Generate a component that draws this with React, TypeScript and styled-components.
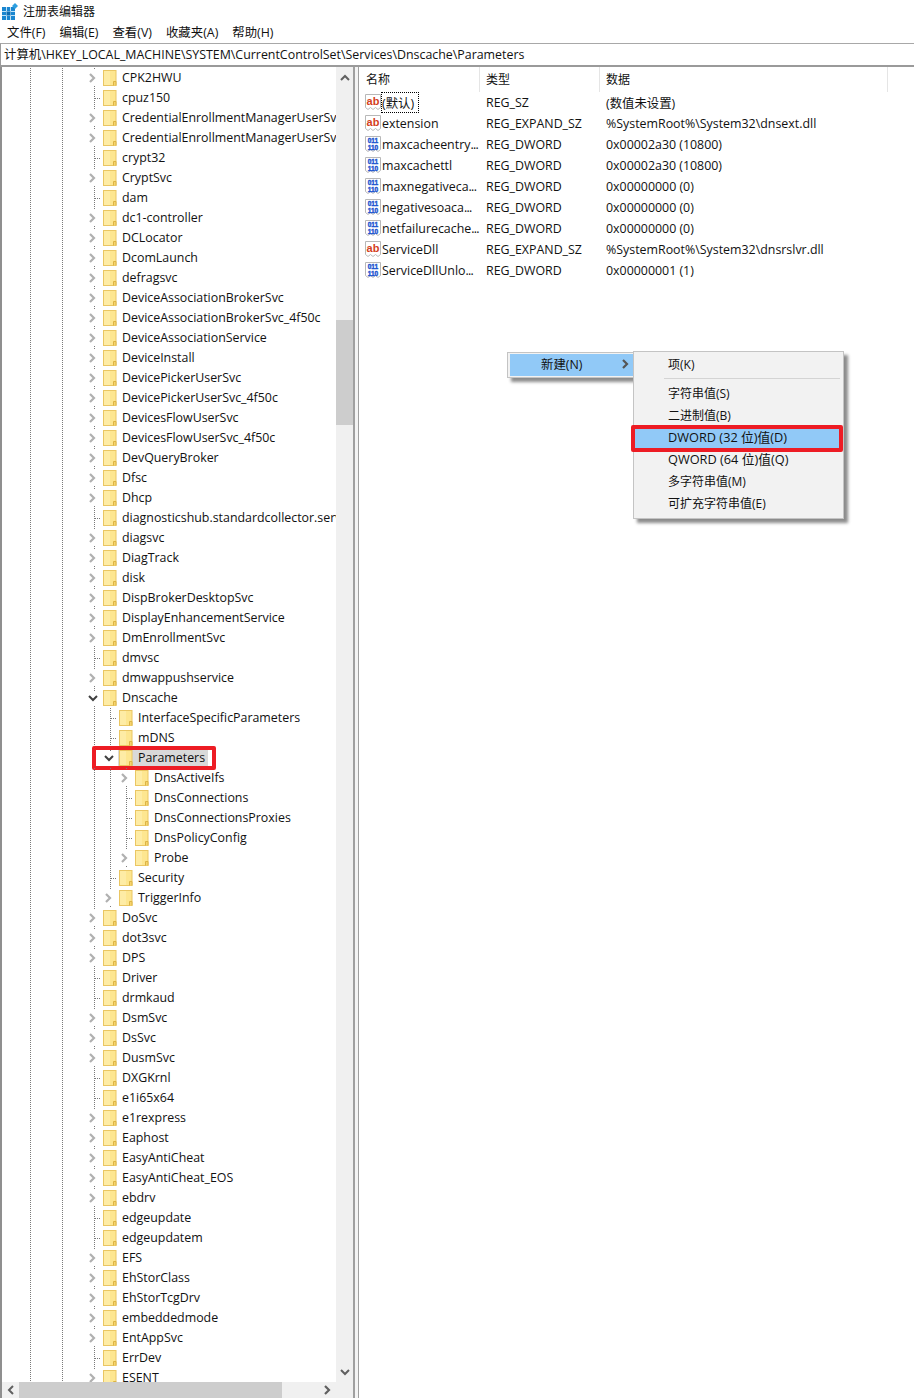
import React from "react";
import styled, { createGlobalStyle } from "styled-components";

const Global = createGlobalStyle`
  html, body { margin: 0; padding: 0; background: #fff; }
  body { font-family: "Open Sans", "Noto Sans CJK SC", sans-serif; font-size: 12.4px; color: #111; }
`;

const Window = styled.div`
  width: 914px;
  height: 1398px;
  display: flex;
  flex-direction: column;
  overflow: hidden;
  background: #fff;
`;
const TitleBar = styled.div`
  height: 22px;
  display: flex;
  align-items: center;
  gap: 5px;
  padding-left: 2px;
  font-size: 12px;
`;
const MenuBar = styled.div`
  height: 21px;
  box-sizing: border-box;
  display: flex;
  align-items: center;
  gap: 14px;
  padding: 0 0 2px 7px;
`;
const AddressBar = styled.div`
  height: 24px;
  display: flex;
  align-items: center;
  padding: 0 0 2px 3px;
  box-sizing: border-box;
  border-top: 1px solid #a8a8a8;
  border-bottom: 2px solid #9a9a9a;
  border-left: 1px solid #9a9a9a;
  white-space: nowrap;
`;
const Split = styled.div`
  flex: 1;
  min-height: 0;
  display: flex;
`;
const TreePane = styled.div`
  width: 353px;
  flex: none;
  box-sizing: border-box;
  border-left: 2px solid #8f8f8f;
  display: grid;
  grid-template-columns: 1fr 17px;
  grid-template-rows: 1fr 16px;
  min-height: 0;
`;
const Divider = styled.div`
  width: 3px;
  flex: none;
  background: #f4f4f4;
  border-left: 2px solid #a0a0a0;
  border-right: 1px solid #a0a0a0;
`;
const Tree = styled.div`
  overflow: hidden;
  min-height: 0;
  padding: 1px 0 0 20px;
`;
const Row = styled.div`
  position: relative;
  height: 20px;
  display: flex;
  align-items: stretch;
  white-space: nowrap;
`;
const Cell = styled.div<{ $line?: boolean }>`
  width: 16px;
  flex: none;
  position: relative;
  display: flex;
  align-items: center;
  justify-content: center;
  background-image: ${(p) => (p.$line ? "linear-gradient(#7a7a7a 50%, transparent 50%)" : "none")};
  background-size: 1px 2px;
  background-repeat: repeat-y;
  background-position: 8px 0;
`;
const BranchTick = styled.div`
  position: absolute;
  left: 9px;
  top: 10px;
  width: 6px;
  height: 1px;
  background-image: linear-gradient(90deg, #7a7a7a 50%, transparent 50%);
  background-size: 2px 1px;
`;
const ChevronBox = styled.span`
  display: flex;
  background: #fff;
  padding: 3px 1px;
  margin-right: 3px;
`;
const FolderCell = styled.div`
  width: 16px;
  flex: none;
  display: flex;
  align-items: center;
  justify-content: center;
`;
const Label = styled.span`
  display: flex;
  align-items: center;
  padding: 0 3px 0 4px;
  line-height: 20px;
`;
const Selected = styled.div`
  display: flex;
  background: #d9d9d9;
`;
const RedFrame = styled.div`
  position: absolute;
  border: 4px solid #ed1c24;
  border-radius: 2px;
  box-sizing: border-box;
  pointer-events: none;
`;
const ParamFrame = styled(RedFrame)`
  left: 70px;
  top: -2px;
  width: 124px;
  height: 24px;
`;
const VBar = styled.div`
  background: #f0f0f0;
  display: flex;
  flex-direction: column;
  align-items: center;
  min-height: 0;
`;
const VThumb = styled.div`
  width: 100%;
  height: 105px;
  flex: none;
  background: #cdcdcd;
`;
const VSpace = styled.div<{ $h?: number; $grow?: boolean }>`
  width: 100%;
  ${(p) => (p.$h ? `height:${p.$h}px;flex:none;` : "")}
  ${(p) => (p.$grow ? "flex:1;" : "")}
  display:flex;
  align-items: center;
  justify-content: center;
`;
const HBar = styled.div`
  background: #f0f0f0;
  display: flex;
  align-items: stretch;
`;
const HButton = styled.div`
  width: 17px;
  flex: none;
  display: flex;
  align-items: center;
  justify-content: center;
`;
const HThumb = styled.div`
  width: 263px;
  flex: none;
  background: #cdcdcd;
`;
const HSpace = styled.div`
  flex: 1;
`;
const Corner = styled.div`
  background: #f0f0f0;
`;
const ListPane = styled.div`
  flex: 1;
  position: relative;
  min-width: 0;
`;
const ListGrid = styled.div`
  display: grid;
  grid-template-columns: 121px 120px 288px;
  width: 529px;
`;
const HeaderCell = styled.div<{ $first?: boolean }>`
  height: 25px;
  display: flex;
  align-items: center;
  padding: 0 0 2px ${(p) => (p.$first ? "7px" : "6px")};
  box-sizing: border-box;
  border-right: 1px solid #e5e5e5;
  font-size: 12px;
`;
const NameCell = styled.div`
  height: 21px;
  display: flex;
  align-items: center;
  padding-left: 6px;
  gap: 1px;
  white-space: nowrap;
`;
const ValueCell = styled.div`
  height: 21px;
  display: flex;
  align-items: center;
  padding-left: 6px;
  white-space: nowrap;
`;
const FocusName = styled.span<{ $focus?: boolean }>`
  ${(p) =>
    p.$focus
      ? "outline: 1px dotted #000; padding: 0 4px 0 0; height: 19px; display:flex; align-items:center;"
      : ""}
`;
const Dots = styled.span`
  letter-spacing: -0.7px;
`;
const MenuOne = styled.div`
  position: absolute;
  left: 148px;
  top: 285px;
  width: 127px;
  height: 26px;
  box-sizing: border-box;
  padding: 1px 0 1px 2px;
  background: #f2f2f2;
  border: 1px solid #c4c4c4;
  box-shadow: 4px 4px 3px rgba(0, 0, 0, 0.45);
`;
const MenuOneItem = styled.div`
  height: 100%;
  box-sizing: border-box;
  background: #91c9f7;
  display: flex;
  align-items: center;
  justify-content: space-between;
  padding: 0 4px 2px 31px;
`;
const MenuTwo = styled.div`
  position: absolute;
  left: 274px;
  top: 284px;
  width: 211px;
  height: 168px;
  box-sizing: border-box;
  padding: 1px 0;
  background: #f2f2f2;
  border: 1px solid #c4c4c4;
  box-shadow: 4px 4px 3px rgba(0, 0, 0, 0.45);
`;
const MenuItem = styled.div<{ $active?: boolean; $latin?: boolean }>`
  position: relative;
  height: 22px;
  box-sizing: border-box;
  display: flex;
  align-items: center;
  padding: 0 0 ${(p) => (p.$latin ? "1px" : "0")} 34px;
  margin-right: 2px;
  background: ${(p) => (p.$active ? "#91c9f7" : "transparent")};
  font-size: ${(p) => (p.$latin ? "12.75px" : "12px")};
  white-space: pre;
`;
const MenuSep = styled.div`
  height: 1px;
  margin: 3px 3px 3px 30px;
  background: #d4d4d4;
`;
const DwordFrame = styled(RedFrame)`
  left: -3px;
  top: -1px;
  width: 212px;
  height: 27px;
`;

const AppIcon = () => (
  <svg width="16" height="18" viewBox="0 0 16 18">
    <rect x="0" y="5" width="13" height="13" fill="#1a86d0" />
    <path d="M0 9.5h13M0 13.5h13M4.5 5v13M8.5 5v13" stroke="#bfe2f7" strokeWidth="1" />
    <rect x="4.5" y="9.5" width="4" height="4" fill="#0d6bb0" />
    <path d="M13 1l3 3-3 3-3-3z" fill="#2f9fe0" />
  </svg>
);
const Folder = () => (
  <svg width="14" height="16" viewBox="0 0 14 16">
    <rect x="0.5" y="0.5" width="12.5" height="15" fill="#fde690" stroke="#eac663" />
    <rect x="1" y="1" width="6" height="14" fill="#fff0b4" opacity="0.6" />
    <path d="M10.5 15.5v-4h2.5v4" fill="#f6d46e" stroke="#dcb445" strokeWidth="1" />
  </svg>
);
const ChevronRight = ({ color = "#b0b0b0" }: { color?: string }) => (
  <svg width="7" height="10" viewBox="0 0 7 10">
    <path d="M1 1l4 4-4 4" fill="none" stroke={color} strokeWidth="2.2" />
  </svg>
);
const ChevronLeft = () => (
  <svg width="7" height="10" viewBox="0 0 7 10">
    <path d="M6 1L2 5l4 4" fill="none" stroke="#606060" strokeWidth="2" />
  </svg>
);
const ChevronDown = ({ color = "#404040" }: { color?: string }) => (
  <svg width="10" height="7" viewBox="0 0 10 7">
    <path d="M1 1l4 4 4-4" fill="none" stroke={color} strokeWidth="2" />
  </svg>
);
const ChevronUp = () => (
  <svg width="10" height="7" viewBox="0 0 10 7">
    <path d="M1 6l4-4 4 4" fill="none" stroke="#606060" strokeWidth="2" />
  </svg>
);
const Page = ({ children }: { children: React.ReactNode }) => (
  <svg width="16" height="17" viewBox="0 0 16 17">
    <path d="M.5.5h15v13l-2.5 2-2.5-2-2.5 2-2.5-2-2.5 2-2.5-2z" fill="#fff" stroke="#b8b8b8" />
    {children}
  </svg>
);
const AbIcon = () => (
  <Page>
    <text x="8" y="11" textAnchor="middle" fontSize="11" fontWeight="700" fontFamily="Liberation Sans, sans-serif" fill="#d4401c">ab</text>
  </Page>
);
const BinIcon = () => (
  <Page>
    <text x="8" y="7" textAnchor="middle" fontSize="6.5" fontWeight="700" stroke="#1d55d0" strokeWidth="0.4" fontFamily="Liberation Sans, sans-serif" fill="#1d55d0">011</text>
    <text x="8" y="14" textAnchor="middle" fontSize="6.5" fontWeight="700" stroke="#1d55d0" strokeWidth="0.4" fontFamily="Liberation Sans, sans-serif" fill="#1d55d0">110</text>
  </Page>
);

type Kind = "c" | "b";
const before: [string, Kind][] = [
  ["CPK2HWU", "c"], ["cpuz150", "b"], ["CredentialEnrollmentManagerUserSvc", "c"],
  ["CredentialEnrollmentManagerUserSvc_4f50c", "c"], ["crypt32", "b"], ["CryptSvc", "c"], ["dam", "b"],
  ["dc1-controller", "c"], ["DCLocator", "c"], ["DcomLaunch", "c"], ["defragsvc", "c"],
  ["DeviceAssociationBrokerSvc", "c"], ["DeviceAssociationBrokerSvc_4f50c", "c"],
  ["DeviceAssociationService", "c"], ["DeviceInstall", "c"], ["DevicePickerUserSvc", "c"],
  ["DevicePickerUserSvc_4f50c", "c"], ["DevicesFlowUserSvc", "c"], ["DevicesFlowUserSvc_4f50c", "c"],
  ["DevQueryBroker", "c"], ["Dfsc", "c"], ["Dhcp", "c"], ["diagnosticshub.standardcollector.service", "b"],
  ["diagsvc", "c"], ["DiagTrack", "c"], ["disk", "c"], ["DispBrokerDesktopSvc", "c"],
  ["DisplayEnhancementService", "c"], ["DmEnrollmentSvc", "c"], ["dmvsc", "b"], ["dmwappushservice", "c"],
];
const after: [string, Kind][] = [
  ["DoSvc", "c"], ["dot3svc", "c"], ["DPS", "c"], ["Driver", "b"], ["drmkaud", "b"], ["DsmSvc", "c"],
  ["DsSvc", "c"], ["DusmSvc", "c"], ["DXGKrnl", "b"], ["e1i65x64", "b"], ["e1rexpress", "c"], ["Eaphost", "c"],
  ["EasyAntiCheat", "c"], ["EasyAntiCheat_EOS", "c"], ["ebdrv", "c"], ["edgeupdate", "b"], ["edgeupdatem", "b"],
  ["EFS", "c"], ["EhStorClass", "c"], ["EhStorTcgDrv", "c"], ["embeddedmode", "c"], ["EntAppSvc", "c"],
  ["ErrDev", "b"], ["ESENT", "c"],
];

const Marker = ({ kind }: { kind: Kind | "d" }) =>
  kind === "b" ? (
    <Cell $line><BranchTick /></Cell>
  ) : kind === "c" ? (
    <Cell $line><ChevronBox><ChevronRight /></ChevronBox></Cell>
  ) : (
    <Cell $line><ChevronBox><ChevronDown /></ChevronBox></Cell>
  );

const Guides = ({ lines }: { lines: boolean[] }) => (
  <>
    {lines.map((l, i) => (
      <Cell key={i} $line={l} />
    ))}
  </>
);

const Node = ({ name, kind, lines }: { name: string; kind: Kind | "d"; lines: boolean[] }) => (
  <Row>
    <Guides lines={lines} />
    <Marker kind={kind} />
    <FolderCell><Folder /></FolderCell>
    <Label>{name}</Label>
  </Row>
);

const L0 = [true, false, true, false];
const L1 = [...L0, true];
const L2 = [...L1, true];

const values: [string, boolean, "ab" | "bin", string, string][] = [
  ["(默认)", false, "ab", "REG_SZ", "(数值未设置)"],
  ["extension", false, "ab", "REG_EXPAND_SZ", "%SystemRoot%\\System32\\dnsext.dll"],
  ["maxcacheentry", true, "bin", "REG_DWORD", "0x00002a30 (10800)"],
  ["maxcachettl", false, "bin", "REG_DWORD", "0x00002a30 (10800)"],
  ["maxnegativeca", true, "bin", "REG_DWORD", "0x00000000 (0)"],
  ["negativesoaca", true, "bin", "REG_DWORD", "0x00000000 (0)"],
  ["netfailurecache", true, "bin", "REG_DWORD", "0x00000000 (0)"],
  ["ServiceDll", false, "ab", "REG_EXPAND_SZ", "%SystemRoot%\\System32\\dnsrslvr.dll"],
  ["ServiceDllUnlo", true, "bin", "REG_DWORD", "0x00000001 (1)"],
];

export default function App() {
  return (
    <Window>
      <Global />
      <TitleBar>
        <AppIcon />
        <span>注册表编辑器</span>
      </TitleBar>
      <MenuBar>
        <span>文件(F)</span>
        <span>编辑(E)</span>
        <span>查看(V)</span>
        <span>收藏夹(A)</span>
        <span>帮助(H)</span>
      </MenuBar>
      <AddressBar>计算机\HKEY_LOCAL_MACHINE\SYSTEM\CurrentControlSet\Services\Dnscache\Parameters</AddressBar>
      <Split>
        <TreePane>
          <Tree>
            {before.map(([n, k]) => (
              <Node key={n} name={n} kind={k} lines={L0} />
            ))}
            <Node name="Dnscache" kind="d" lines={L0} />
            <Node name="InterfaceSpecificParameters" kind="b" lines={L1} />
            <Node name="mDNS" kind="b" lines={L1} />
            <Row>
              <Guides lines={L1} />
              <Marker kind="d" />
              <Selected>
                <FolderCell><Folder /></FolderCell>
                <Label>Parameters</Label>
              </Selected>
              <ParamFrame />
            </Row>
            <Node name="DnsActiveIfs" kind="c" lines={L2} />
            <Node name="DnsConnections" kind="b" lines={L2} />
            <Node name="DnsConnectionsProxies" kind="b" lines={L2} />
            <Node name="DnsPolicyConfig" kind="b" lines={L2} />
            <Node name="Probe" kind="c" lines={L2} />
            <Node name="Security" kind="b" lines={L1} />
            <Node name="TriggerInfo" kind="c" lines={L1} />
            {after.map(([n, k]) => (
              <Node key={n} name={n} kind={k} lines={L0} />
            ))}
          </Tree>
          <VBar>
            <VSpace $h={20}><ChevronUp /></VSpace>
            <VSpace $h={233} />
            <VThumb />
            <VSpace $grow />
            <VSpace $h={20}><ChevronDown color="#606060" /></VSpace>
          </VBar>
          <HBar>
            <HButton><ChevronLeft /></HButton>
            <HThumb />
            <HSpace />
            <HButton><ChevronRight color="#606060" /></HButton>
          </HBar>
          <Corner />
        </TreePane>
        <Divider />
        <ListPane>
          <ListGrid>
            <HeaderCell $first>名称</HeaderCell>
            <HeaderCell>类型</HeaderCell>
            <HeaderCell>数据</HeaderCell>
            {values.map(([n, cut, ic, t, d], i) => (
              <React.Fragment key={n}>
                <NameCell>
                  {ic === "ab" ? <AbIcon /> : <BinIcon />}
                  <FocusName $focus={i === 0}>
                    {n}
                    {cut && <Dots>...</Dots>}
                  </FocusName>
                </NameCell>
                <ValueCell>{t}</ValueCell>
                <ValueCell>{d}</ValueCell>
              </React.Fragment>
            ))}
          </ListGrid>
          <MenuOne>
            <MenuOneItem>
              <span>新建(N)</span>
              <ChevronRight color="#555" />
            </MenuOneItem>
          </MenuOne>
          <MenuTwo>
            <MenuItem>项(K)</MenuItem>
            <MenuSep />
            <MenuItem>字符串值(S)</MenuItem>
            <MenuItem>二进制值(B)</MenuItem>
            <MenuItem $active $latin>
              DWORD (32 位)值(D)
              <DwordFrame />
            </MenuItem>
            <MenuItem $latin>QWORD (64 位)值(Q)</MenuItem>
            <MenuItem>多字符串值(M)</MenuItem>
            <MenuItem>可扩充字符串值(E)</MenuItem>
          </MenuTwo>
        </ListPane>
      </Split>
    </Window>
  );
}
